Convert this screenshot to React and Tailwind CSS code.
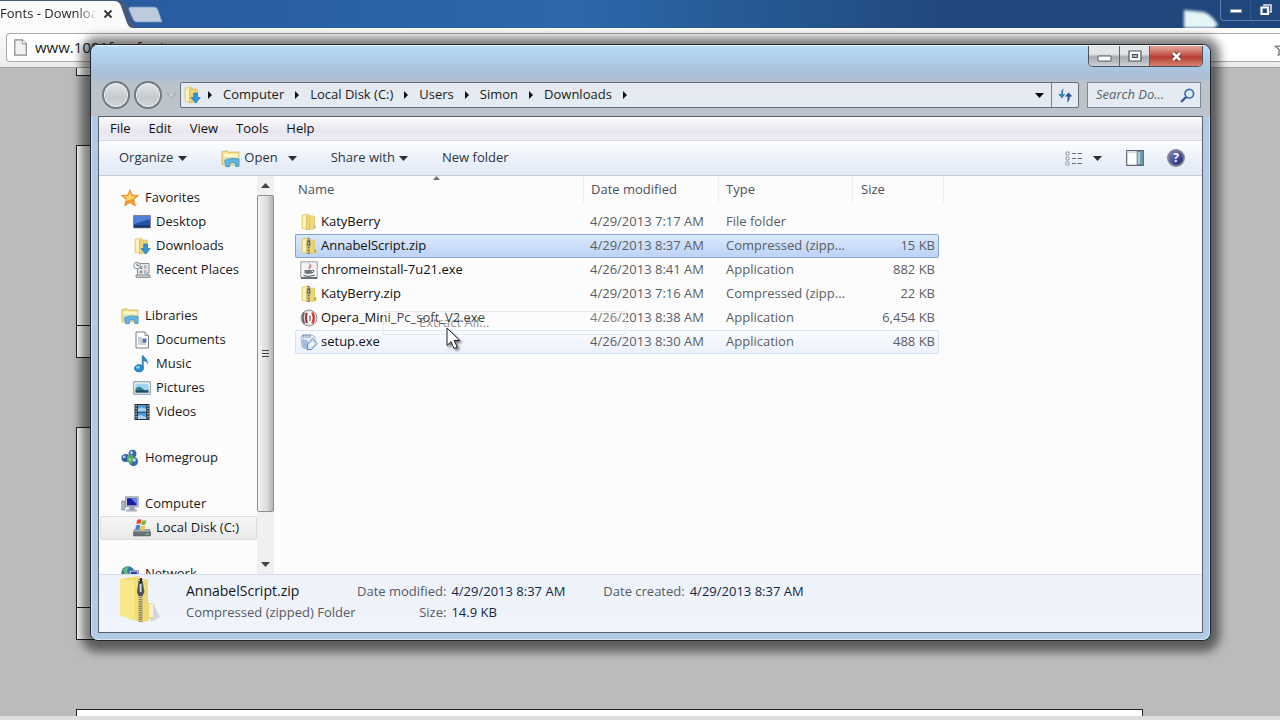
import { useState } from 'react';

const TREE = [
  { name: 'Favorites', icon: StarIcon, items: [
    { name: 'Desktop', icon: DesktopIcon },
    { name: 'Downloads', icon: DownloadsIcon },
    { name: 'Recent Places', icon: RecentIcon },
  ] },
  { name: 'Libraries', icon: LibraryIcon, items: [
    { name: 'Documents', icon: DocumentIcon },
    { name: 'Music', icon: MusicIcon },
    { name: 'Pictures', icon: PictureIcon },
    { name: 'Videos', icon: VideoIcon },
  ] },
  { name: 'Homegroup', icon: HomegroupIcon, items: [] },
  { name: 'Computer', icon: ComputerIcon, items: [{ name: 'Local Disk (C:)', icon: DiskIcon, current: true }] },
  { name: 'Network', icon: NetworkIcon, items: [] },
];

const FILES = [
  { name: 'KatyBerry', icon: FolderIcon, date: '4/29/2013 7:17 AM', type: 'File folder', size: '' },
  { name: 'AnnabelScript.zip', icon: ZipIcon, date: '4/29/2013 8:37 AM', type: 'Compressed (zipp...', size: '15 KB' },
  { name: 'chromeinstall-7u21.exe', icon: JavaIcon, date: '4/26/2013 8:41 AM', type: 'Application', size: '882 KB' },
  { name: 'KatyBerry.zip', icon: ZipIcon, date: '4/29/2013 7:16 AM', type: 'Compressed (zipp...', size: '22 KB' },
  { name: 'Opera_Mini_Pc_soft_V2.exe', icon: OperaIcon, date: '4/26/2013 8:38 AM', type: 'Application', size: '6,454 KB' },
  { name: 'setup.exe', icon: SetupIcon, date: '4/26/2013 8:30 AM', type: 'Application', size: '488 KB' },
];

const CRUMBS = ['Computer', 'Local Disk (C:)', 'Users', 'Simon', 'Downloads'];

/* ---------- icons ---------- */

function Icon({ children, className = 'size-[18px]' }) {
  return <svg viewBox="0 0 18 18" className={`shrink-0 ${className}`} aria-hidden="true">{children}</svg>;
}

function StarIcon() {
  return (
    <Icon>
      <path d="M9 .8l2.3 5.3 6.1.5-4.6 4 1.5 6.3L9 13.6l-5.3 3.3 1.5-6.3-4.6-4 6.1-.5z" fill="#f59b2e" stroke="#e08326" strokeWidth=".8" />
      <path d="M9 3l1.6 4 4 .4-3.1 2.5L9 10.500 5 12l.9-2.400-2.800-2.300 4.200-.4z" fill="#ffd766" />
    </Icon>
  );
}

function DesktopIcon() {
  return (
    <Icon>
      <path d="M.6 2.500h16.800v12.300H.6z" fill="#2453a8" stroke="#76849b" />
      <path d="M1 3h16v3L1 11z" fill="#4f82d6" />
      <path d="M1 12.600h16v2H1z" fill="#1b2c50" />
    </Icon>
  );
}

function FolderBase() {
  return (
    <>
      <path d="M2 2.200l6-1.400 1.200 1.500v14L2 15.500z" fill="#f5e48e" stroke="#d6bd62" strokeWidth=".6" />
      <path d="M6.500 3h7l1 1v11.600l-8 1.200z" fill="#ecd57a" stroke="#cbb057" strokeWidth=".6" />
      <path d="M3 3.200l3-.7v12.800l-3-.4z" fill="#fbf3bd" />
    </>
  );
}

function FolderIcon() {
  return (
    <Icon>
      <FolderBase />
      <path d="M8.800 2l5 1v9.500l2 .6v2.500l-3.600 1.400-2.800-1z" fill="#f0db7b" />
      <path d="M9.800 4v12" stroke="#dcc05c" />
      <path d="M13.400 12.500h1.800v3h-1.800z" fill="#a9b99a" />
    </Icon>
  );
}

function ZipIcon() {
  return (
    <Icon>
      <FolderBase />
      <path d="M12 3l2.500 1v8l2 .8v3l-3.500 1.200H12z" fill="#ecd36c" />
      <path d="M8.700 1v16" stroke="#75726a" strokeWidth="2.200" strokeDasharray="1 .5" />
      <path d="M7.500 3.500h2.600l.4 5H7.100z" fill="#4e565c" />
      <path d="M8.200 5h1v2.600h-1z" fill="#d6dde2" />
      <path d="M14.200 12.500h1.800v3h-1.800z" fill="#b3a468" />
    </Icon>
  );
}

function BigZipIcon() {
  return (
    <svg viewBox="0 0 44 50" className="h-[50px] w-11 shrink-0" aria-hidden="true">
      <path d="M30 36l5-8 7 14-9 5z" fill="#9a9a9a" opacity=".35" />
      <path d="M2 4l20-3v46L2 40z" fill="#f0dc72" />
      <path d="M8 4h22v38l-8 4-14-4z" fill="#f3df72" />
      <path d="M2 4l14 2v40L2 40z" fill="#f7e988" />
      <path d="M24 6l6-2v24h4v14l-4 4-6 1z" fill="#eeda70" />
      <path d="M31 29h4v13h-4z" fill="#f7f1cf" />
      <path d="M22.500 4v43" stroke="#8b8478" strokeWidth="4" strokeDasharray="1.500 .7" />
      <path d="M20.500 6h4l2 11-2 4h-4l-1.500-4z" fill="#4b545d" />
      <path d="M21.700 9h1.800v8h-1.800z" fill="#d3dade" />
      <path d="M22 3h2v5h-2z" fill="#22272b" />
    </svg>
  );
}

function DownloadsIcon() {
  return (
    <Icon>
      <FolderBase />
      <path d="M10.700 7h3.800v4.600h2.900l-4.700 5.600L8 11.600h2.700z" fill="#2f97dd" stroke="#1f6cae" strokeWidth=".6" />
    </Icon>
  );
}

function RecentIcon() {
  return (
    <Icon>
      <path d="M5 2.500h11v9.500h-1.500v3.500H4.500V8z" fill="#e6e8ea" stroke="#7d8388" strokeWidth=".9" />
      <path d="M7 5.500h2v2H7zM11 5h2.500M11 7h2.500M7 10h2v2H7zM11 10h2.500M11 12h2.500" fill="none" stroke="#70777d" strokeWidth=".8" />
      <path d="M3 14h14v2.500H3z" fill="#c8cccf" stroke="#7d8388" strokeWidth=".8" />
      <circle cx="4" cy="4.500" r="3.300" fill="#f5f6f7" stroke="#7c868e" strokeWidth=".9" />
      <path d="M4 2.500v2h1.800" fill="none" stroke="#38424a" strokeWidth=".8" />
    </Icon>
  );
}

function LibraryIcon({ className }) {
  return (
    <Icon className={className}>
      <path d="M1 2.500l5-.8 1 1.300h10v12H1z" fill="#f6e28b" stroke="#c6aa50" strokeWidth=".7" />
      <path d="M2.500 4.500h14v3h-14z" fill="#fdf5c6" />
      <path d="M3 7.500h13.800v6.500L3 15z" fill="#cfe7c2" />
      <path d="M3.500 10.800q5.500-2.800 13.500-1.300v7h-3.200v-3.200q-3-1-5.500 0v3.400H4.500z" fill="#62b4e2" stroke="#4287b5" strokeWidth=".7" />
    </Icon>
  );
}

function DocumentIcon() {
  return (
    <Icon>
      <path d="M3 1h9l3.500 3.500V17H3z" fill="#fff" stroke="#767f8a" />
      <path d="M12 1v3.500h3.500" fill="#dfe5ec" stroke="#767f8a" strokeWidth=".8" />
      <path d="M5 7h4M5 9h4M5 11h8M5 13h8" stroke="#8d96a5" strokeWidth=".9" />
      <path d="M9.500 7.500h4v4h-4z" fill="#536fb5" />
    </Icon>
  );
}

function MusicIcon() {
  return (
    <Icon>
      <ellipse cx="6" cy="13.300" rx="4.600" ry="3.700" fill="#2b8bc6" stroke="#1d6799" strokeWidth=".6" />
      <ellipse cx="5" cy="12.300" rx="2.200" ry="1.400" fill="#86cdf0" />
      <path d="M8.800.600h1.900c.7 2.500 4.800 3.200 4.200 9.200-.3-2-2-3.400-4.200-3.600v7.600H8.800z" fill="#2f86be" />
    </Icon>
  );
}

function PictureIcon() {
  return (
    <Icon>
      <path d="M.8 2.800h16.400v12.400H.8z" fill="#fff" stroke="#7e8994" />
      <path d="M2.500 4.500h13v9h-13z" fill="#9fd4f0" />
      <path d="M2.500 9.500q4-3.500 7 0t6 .5v3.500h-13z" fill="#317f91" />
      <path d="M2.500 12q6-2 13 0v1.500h-13z" fill="#234f5c" />
    </Icon>
  );
}

function VideoIcon() {
  return (
    <Icon>
      <path d="M1.500 1h15v16h-15z" fill="#262d33" />
      <path d="M4.800 2h8.400v6.400H4.800zM4.800 9.600h8.400V16H4.800z" fill="#4c9ad6" />
      <path d="M4.800 6l4-2 4.400 2v2.400H4.800zM4.800 13l3-1 5.400 2v2H4.800z" fill="#a4d3f1" />
      <path d="M3.100 2v14M14.900 2v14" stroke="#c9d0d5" strokeWidth="1.300" strokeDasharray="1.400 1.300" />
    </Icon>
  );
}

function HomegroupIcon() {
  return (
    <Icon>
      <circle cx="11.500" cy="4.700" r="3.900" fill="#3a62ae" />
      <circle cx="4.500" cy="9" r="4" fill="#325f9f" />
      <circle cx="12.500" cy="12.500" r="4.500" fill="#3566b3" />
      <path d="M6 7l5-2 2 4-2 6-5-2z" fill="#56a957" />
      <circle cx="10.500" cy="3.500" r="1.500" fill="#b5cff1" />
      <circle cx="3.200" cy="7.800" r="1.500" fill="#a6c8ea" />
      <circle cx="13.200" cy="11" r="1.700" fill="#b9d6f4" />
      <path d="M7 9l3 1-1 3z" fill="#b3e0a0" />
    </Icon>
  );
}

function ComputerIcon() {
  return (
    <Icon>
      <path d="M.8 6h3v9h-3z" fill="#b6bcc4" stroke="#767e88" strokeWidth=".7" />
      <path d="M4.500 1.800h12.700v10H4.500z" fill="#c7ccd4" stroke="#767d8a" strokeWidth=".7" />
      <path d="M6 3.200h9.700v7.200H6z" fill="#1a1fa5" />
      <path d="M10 3.200h5.700v6z" fill="#6d83ea" />
      <path d="M9 12h4l1.500 3h-7z" fill="#9aa2ae" />
      <path d="M5.500 14.800h10v1.400h-10z" fill="#c4c9d1" stroke="#858c97" strokeWidth=".5" />
    </Icon>
  );
}

function DiskIcon() {
  return (
    <Icon>
      <path d="M1.800 10.500h14.500l1.300 2.500v4H.5v-4z" fill="#69707a" stroke="#50565e" strokeWidth=".5" />
      <path d="M2 10.600h14l1 1.900H1z" fill="#a9b0b6" />
      <path d="M12.500 14.400h3.300v1.300h-3.300z" fill="#76cf74" />
      <path d="M4.200 1.200q2-1.500 4.300-.5L7.600 5q-2-1-4.300.3z" fill="#dd4f2b" />
      <path d="M9.300 1.200q2 .9 4.100-.3L12.300 5.500q-2 1-4 .2z" fill="#7eb83a" />
      <path d="M3.100 6.500q2.200-1.300 4.300-.3l-1 4.500q-2-.9-4.200.4z" fill="#3f83d1" />
      <path d="M8.200 6.800q2 .9 4.100-.1l-1 4.200q-2 1-4 .1z" fill="#f2c53b" />
    </Icon>
  );
}

function NetworkIcon() {
  return (
    <Icon>
      <circle cx="7" cy="8" r="6.700" fill="#2d79a8" />
      <path d="M2 5q3-4 6-3l-2 4 2 3-4 2z" fill="#65b77a" />
      <path d="M8.500 5.500h9v6.500h-9z" fill="#c9d0dc" stroke="#6d7893" strokeWidth=".7" />
      <path d="M9.800 6.700h6.400v4.200H9.800z" fill="#2c3fae" />
    </Icon>
  );
}

function JavaIcon() {
  return (
    <Icon>
      <path d="M.8.800h16.400v16.400H.8z" fill="#f3f3f3" stroke="#9a9da0" />
      <path d="M1 17h16.200" stroke="#4d5358" strokeWidth="1.500" />
      <path d="M9 2.500q2.500 1.500.5 3t.5 3M11.500 4.500q-2 1.300-.5 2.500" fill="none" stroke="#b0645c" strokeWidth="1" />
      <path d="M4.500 9h7.300v3.300q-3.500 1.500-7.300 0z" fill="#6b7683" />
      <path d="M11.800 9.300q3-.2 1.500 1.800l-2 1M3.500 14.500q5.500 2 11-.3" fill="none" stroke="#4e5861" />
    </Icon>
  );
}

function OperaIcon() {
  return (
    <Icon>
      <circle cx="9" cy="9" r="8" fill="#d8dadc" stroke="#8d9194" strokeWidth=".9" />
      <path d="M4.200 3.500q-3 5.500.3 11" fill="none" stroke="#5d6266" strokeWidth="1.800" />
      <ellipse cx="10" cy="9" rx="5" ry="6.500" fill="#f7f7f7" />
      <path d="M6.800 4q-1.800 5 .2 10" fill="none" stroke="#a83330" strokeWidth="2" />
      <path d="M12.300 3.500q3 5.500 0 11" fill="none" stroke="#d6402f" strokeWidth="2.400" />
      <path d="M10 6.500v5.500" stroke="#5c6d8a" strokeWidth="1.300" />
    </Icon>
  );
}

function SetupIcon() {
  return (
    <Icon>
      <path d="M1 4l2-2h9l3 2v9l-7 4-6-3z" fill="#e6edf5" stroke="#8ba1bb" strokeWidth=".7" />
      <path d="M2 6l6 1.500v9L2.500 14z" fill="#9dbde2" />
      <path d="M2.500 2.200h9M2.500 4h9" stroke="#56779f" strokeWidth="1" strokeDasharray="2 1" />
      <path d="M12.500 5.500l4.500 5-5.500 6H7.500v-5z" fill="#cfe2f6" stroke="#5782b8" strokeWidth=".9" />
      <path d="M9 12l3.500-3.500 2 2.200L11 14.500H9z" fill="#f4f9fe" />
    </Icon>
  );
}

function Caret({ className = 'fill-[#27303c]' }) {
  return <svg viewBox="0 0 9 5" className={`h-[5px] w-[9px] shrink-0 ${className}`} aria-hidden="true"><path d="M0 0h9L4.500 5z" /></svg>;
}

function CrumbArrow() {
  return <svg viewBox="0 0 4 8" className="h-2 w-1 shrink-0" aria-hidden="true"><path d="M0 0l4 4-4 4z" fill="#111" /></svg>;
}

/* ---------- browser behind the window ---------- */

function Browser() {
  return (
    <div className="flex h-full flex-col bg-[#bbbbbb]">
      <div className="flex h-7 shrink-0 items-start justify-between bg-linear-to-r from-[#28589c] via-[#2c68aa] via-45% to-[#20477b] to-75%">
        <div className="relative h-7 w-[170px]">
          <svg viewBox="0 0 170 28" className="absolute inset-0 h-7 w-[170px]" aria-hidden="true">
            <path d="M0 0h118q6 0 8 6l6 16q2 5 6 6H0z" fill="#47597a" />
            <path d="M0 1h114q5 0 7 5l6 17q2 5 6 5H0z" fill="#fbfbfb" />
            <path d="M131 7h23q3 0 4 3l4 12h-25q-3 0-4-3l-4-9q-1-3 2-3z" fill="#bccbdd" stroke="#7896bf" strokeWidth=".8" />
          </svg>
          <div className="relative flex h-7 items-center">
            <span className="w-[95px] bg-linear-to-r from-[#222] from-80% to-[#222]/20 bg-clip-text whitespace-nowrap text-transparent">Fonts - Downloa</span>
            <button aria-label="Close tab" className="ml-2 size-[10px]">
              <svg viewBox="0 0 10 10" className="size-[10px]"><path d="M1.500 1.500l7 7m0-7l-7 7" stroke="#3c3c3c" strokeWidth="2" /></svg>
            </button>
          </div>
        </div>
        <div className="flex h-7 items-start">
          <svg viewBox="0 0 40 22" className="mt-[6px] h-[22px] w-10" aria-hidden="true">
            <defs><filter id="soft"><feGaussianBlur stdDeviation="1.500" /></filter></defs>
            <path d="M4 4l20 2q8 3 14 13l-4 3H4z" fill="#e6f5f5" filter="url(#soft)" />
          </svg>
          <div className="flex h-[21px] rounded-bl border-b border-l border-[#5f7fae]">
            <button aria-label="Minimize browser" className="flex w-[30px] items-end justify-center border-r border-[#35588f] pb-[7px]">
              <span className="h-1 w-3 border border-[#8a95a8] bg-white" />
            </button>
            <button aria-label="Restore browser" className="flex w-[29px] items-center justify-center">
              <svg viewBox="0 0 14 14" className="size-[14px]"><path d="M5 3V2h7v7h-1.500" fill="none" stroke="#dfe6f0" strokeWidth="1.600" /><path d="M2.500 4.500h6.500v6.500H2.500z" fill="none" stroke="#fff" strokeWidth="2.200" /></svg>
            </button>
          </div>
        </div>
      </div>
      <div className="flex h-10 shrink-0 items-center border-b border-[#a5a5a5] bg-linear-to-b from-[#fcfcfc] to-[#ececec] pl-[6px]">
        <div className="flex h-[29px] min-w-0 flex-1 items-center gap-2 rounded-l border border-r-0 border-[#a9a9a9] bg-white pl-[7px]">
          <svg viewBox="0 0 13 17" className="h-[17px] w-[13px] shrink-0" aria-hidden="true">
            <path d="M.8.800h7.500l4 4v11.400H.8z" fill="#f2f2f2" stroke="#8a8a8a" strokeWidth="1.200" />
            <path d="M8.300.8v4h4" fill="#fff" stroke="#8a8a8a" />
          </svg>
          <input aria-label="Address" defaultValue="www.1001freefonts.com" className="min-w-0 flex-1 bg-transparent text-[15px] text-[#222] outline-none" />
          <div className="w-[6px] overflow-hidden">
            <svg viewBox="0 0 18 18" className="size-[18px]" aria-hidden="true"><path d="M9 2l2.100 5 5.400.4-4.100 3.500 1.300 5.300L9 13.300l-4.700 2.900 1.300-5.300L1.500 7.400 6.900 7z" fill="#fff" stroke="#777" strokeWidth="1.300" /></svg>
          </div>
        </div>
      </div>
      <div className="mr-[137px] ml-[76px] flex min-h-0 flex-1 flex-col gap-[69px] overflow-hidden">
        <div className="h-2 shrink-0 border border-t-0 border-[#222] bg-white" />
        {[0, 1].map((n) => (
          <div key={n} className="flex h-[213px] shrink-0 flex-col border border-[#222] bg-white">
            <div className="flex-1" />
            <div className="h-8 border-t border-[#222]" />
          </div>
        ))}
        <div className="h-20 shrink-0 border border-[#222] bg-white" />
      </div>
      <div className="h-1 shrink-0 bg-[#dedede]" />
    </div>
  );
}

/* ---------- explorer window ---------- */

function CaptionButtons() {
  return (
    <div className="mr-[7px] flex h-[21px] overflow-hidden rounded-b-[5px] border border-t-0 border-[#4a525c]">
      <button aria-label="Minimize" className="flex w-[31px] items-center justify-center border-r border-[#59626c] bg-linear-to-b from-[#e2e5e8] from-40% via-[#a6abb1] via-55% to-[#cdd0d4]">
        <svg viewBox="0 0 15 7" className="mt-1 h-[7px] w-[15px]"><path d="M1 1h13v5H1z" fill="#fff" stroke="#555c64" /></svg>
      </button>
      <button aria-label="Maximize" className="flex w-[30px] items-center justify-center border-r border-[#59626c] bg-linear-to-b from-[#e2e5e8] from-40% via-[#a6abb1] via-55% to-[#cdd0d4]">
        <svg viewBox="0 0 14 12" className="h-3 w-[14px]"><path d="M1 1h12v10H1z" fill="#fff" stroke="#4d545c" strokeWidth="1.200" /><path d="M4.500 4.500h5v3h-5z" fill="#aeb4ba" stroke="#4d545c" strokeWidth="1.200" /></svg>
      </button>
      <button aria-label="Close" className="flex w-[52px] items-center justify-center bg-linear-to-b from-[#dd9a8e] from-10% via-[#b73e31] via-55% to-[#d9806f]">
        <svg viewBox="0 0 13 11" className="h-[11px] w-[13px]"><path d="M3 2l7 7m0-7L3 9" stroke="#5e3531" strokeWidth="4.500" /><path d="M3 2l7 7m0-7L3 9" stroke="#fff" strokeWidth="2.600" /></svg>
      </button>
    </div>
  );
}

function RoundButton({ label }) {
  return (
    <button aria-label={label} className="size-7 shrink-0 rounded-full border-2 border-[#727a82] bg-linear-to-b from-[#e2e4e6] via-[#c6cacf] via-60% to-[#d2d6da] shadow-[inset_0_0_0_1px_#eef1f4]" />
  );
}

function NavBar() {
  return (
    <div className="flex h-[26px] items-center">
      <RoundButton label="Back" />
      <span className="w-1" />
      <RoundButton label="Forward" />
      <button aria-label="Recent pages" className="flex w-[18px] justify-center"><Caret className="fill-[#cdd4dc] stroke-[#98a2ad]" /></button>
      <div className="flex h-[26px] min-w-0 flex-1 rounded-xs border border-[#656e79] bg-linear-to-b from-[#e6e9ee] to-[#e3ecf4]">
        <div className="flex min-w-0 flex-1 items-center gap-[11px] pr-[7px] pl-[2px]">
          <DownloadsIcon />
          <span className="-ml-1 flex items-center gap-[11px]">
            <CrumbArrow />
            {CRUMBS.map((crumb) => (
              <span key={crumb} className="flex items-center gap-[11px]">
                <a href="#" className="whitespace-nowrap">{crumb}</a>
                <CrumbArrow />
              </span>
            ))}
          </span>
          <button aria-label="Previous locations" className="ml-auto"><Caret className="fill-black" /></button>
        </div>
        <button aria-label="Refresh" className="flex w-[27px] items-center justify-center border-l border-[#767f8a]">
          <svg viewBox="0 0 16 16" className="size-4">
            <path d="M6.500 1.500Q4 2.500 4 7H1l4 4.500L8.500 7H6Q6 4 6.500 1.500z" fill="#3d84b4" />
            <path d="M10 15.500q3-1.500 2.700-6H15.500L11.500 5.500 8 9.500h2.500q.5 3-.5 6z" fill="#2b4f98" />
          </svg>
        </button>
      </div>
      <label className="ml-2 flex h-[26px] w-[114px] items-center gap-1 border border-[#7d8793] bg-[#e5ebf2] pr-[5px] pl-2">
        <input type="search" aria-label="Search Downloads" placeholder="Search Do..." className="min-w-0 flex-1 bg-transparent italic outline-none placeholder:text-[#5b6067]" />
        <svg viewBox="0 0 15 15" className="size-[15px] shrink-0"><circle cx="9.300" cy="5.700" r="4.300" fill="#dceaf7" stroke="#3d6fae" strokeWidth="1.700" /><path d="M6.200 9L1 14" stroke="#35598c" strokeWidth="2.400" /></svg>
      </label>
    </div>
  );
}

function MenuBar() {
  return (
    <div className="flex h-6 shrink-0 items-center gap-[18px] border-b border-[#cfd4df] bg-linear-to-b from-[#fbfbfd] via-[#e8e7f0] via-60% to-[#eeedf5] pl-[11px] text-[#111]">
      {['File', 'Edit', 'View', 'Tools', 'Help'].map((item) => <button key={item}>{item}</button>)}
    </div>
  );
}

function Toolbar() {
  return (
    <div className="flex h-[35px] shrink-0 items-center border-b border-[#c3cfdf] bg-linear-to-b from-[#fbfcfe] via-[#eaf0f9] via-60% to-[#e2eaf5] pr-[17px] pl-5 text-[#2b3442]">
      <button className="flex items-center gap-[5px]">Organize <Caret /></button>
      <button className="ml-[34px] flex items-center gap-1"><LibraryIcon className="size-[19px]" />Open</button>
      <button aria-label="Open options" className="ml-[10px]"><Caret /></button>
      <button className="ml-[34px] flex items-center gap-1">Share with <Caret /></button>
      <button className="ml-[34px]">New folder</button>
      <button aria-label="Change view" className="ml-auto flex items-center gap-[10px]">
        <svg viewBox="0 0 18 16" className="h-4 w-[18px]">
          <path d="M1 2h3v3H1zM1 7h3v3H1zM1 12h3v3H1z" fill="#fff" stroke="#8b939d" strokeWidth=".9" />
          <path d="M7 3.500h4M12.500 3.500H17M7 8.500h4M12.500 8.500H17M7 13.500h4M12.500 13.500H17" stroke="#666f7a" strokeWidth="1.200" />
        </svg>
        <Caret />
      </button>
      <button aria-label="Preview pane" className="ml-6">
        <svg viewBox="0 0 18 16" className="h-4 w-[18px]">
          <path d="M.7.700h16.600v14.600H.7z" fill="#fff" stroke="#5d6773" strokeWidth="1.200" />
          <path d="M1.300 1.300h9.500v2H1.300z" fill="#d7dee7" />
          <path d="M11.200 1.300h5.500v13.400h-5.500z" fill="#a9cad6" stroke="#4e6f80" strokeWidth=".9" />
          <path d="M14 1.800h2.300v12.400H14z" fill="#6f9dab" />
        </svg>
      </button>
      <button aria-label="Help" className="ml-[23px] size-[18px] rounded-full border-2 border-[#7f858f] bg-linear-to-br from-[#8184c8] to-[#1d2173] text-xs leading-3 font-bold text-white">?</button>
    </div>
  );
}

function Sidebar() {
  return (
    <div className="flex w-[180px] shrink-0">
      <nav aria-label="Folders" className="flex min-w-0 flex-1 flex-col gap-[22px] overflow-hidden pt-[10px] pl-px">
        {TREE.map((group) => (
          <ul key={group.name}>
            <li>
              <a href="#" className="flex h-6 items-center gap-[6px] pl-[21px] whitespace-nowrap"><group.icon />{group.name}</a>
            </li>
            {group.items.map((item) => (
              <li key={item.name}>
                <a
                  href="#"
                  className={`flex h-6 items-center gap-[5px] border pl-8 whitespace-nowrap ${item.current ? 'rounded-xs border-[#dcdcdc] bg-linear-to-b from-[#f6f6f6] to-[#e9e9e9]' : 'border-transparent'}`}
                >
                  <item.icon />{item.name}
                </a>
              </li>
            ))}
          </ul>
        ))}
      </nav>
      <div className="mr-[5px] flex w-[17px] shrink-0 flex-col bg-[#f0f0f0]">
        <button aria-label="Scroll up" className="flex h-[19px] shrink-0 items-center justify-center"><Caret className="rotate-180 fill-[#444]" /></button>
        <div className="flex-1">
          <div className="flex h-[88%] flex-col items-center justify-center gap-[2px] rounded-xs border border-[#8e8e8e] bg-linear-to-r from-[#f4f4f4] via-[#dcdcdc] via-60% to-[#b4b4b4]">
            <span className="h-px w-[7px] bg-[#444]" />
            <span className="h-px w-[7px] bg-[#444]" />
            <span className="h-px w-[7px] bg-[#444]" />
          </div>
        </div>
        <button aria-label="Scroll down" className="flex h-[19px] shrink-0 items-center justify-center"><Caret className="fill-[#444]" /></button>
      </div>
    </div>
  );
}

function cellStyle(state) {
  if (state === 'selected') return 'border-[#84a5cc] bg-linear-to-b from-[#dbe8fb] to-[#bcd3f8]';
  if (state === 'hover') return 'border-[#d5e3f2] bg-linear-to-b from-[#fafbfe] to-[#edf1fc]';
  return 'border-transparent';
}

function FileList() {
  const [selected, setSelected] = useState('AnnabelScript.zip');

  return (
    <div className="relative min-w-0 flex-1 overflow-hidden pl-4">
      <table className="w-[649px] table-fixed border-separate border-spacing-0 text-left">
        <colgroup>
          <col className="w-[289px]" />
          <col className="w-[135px]" />
          <col className="w-[134px]" />
          <col className="w-[86px]" />
          <col className="w-[5px]" />
        </colgroup>
        <thead className="text-[#4c525a]">
          <tr className="h-[27px]">
            <th className="relative border-r border-[#eceef2] pl-[3px] font-normal">
              Name
              <svg viewBox="0 0 7 4" className="absolute top-0 left-[138px] h-1 w-[7px]" aria-hidden="true"><path d="M0 4l3.500-4L7 4z" fill="#6c747d" /></svg>
            </th>
            <th className="border-r border-[#eceef2] pl-[7px] font-normal">Date modified</th>
            <th className="border-r border-[#eceef2] pl-[7px] font-normal">Type</th>
            <th className="pl-2 font-normal">Size</th>
            <th className="border-r border-[#eceef2]" aria-hidden="true" />
          </tr>
          <tr className="h-[7px]" aria-hidden="true" />
        </thead>
        <tbody className="text-[#5a5e64]">
          {FILES.map((file) => {
            const style = cellStyle(file.name === selected ? 'selected' : file.name === 'setup.exe' ? 'hover' : '');
            return (
              <tr key={file.name} className="h-6" onClick={() => setSelected(file.name)}>
                <td className={`rounded-l-xs border-y border-l p-0 pl-1 text-[#111] ${style}`}>
                  <span className="flex items-center gap-[3px] whitespace-nowrap"><file.icon />{file.name}</span>
                </td>
                <td className={`border-y p-0 pl-[6px] whitespace-nowrap ${style}`}>{file.date}</td>
                <td className={`border-y p-0 pl-[7px] whitespace-nowrap ${style}`}>{file.type}</td>
                <td className={`rounded-r-xs border-y border-r p-0 pr-[3px] text-right whitespace-nowrap ${style}`}>{file.size}</td>
                <td className="p-0" />
              </tr>
            );
          })}
        </tbody>
      </table>

      {/* context menu item fading out */}
      <div className="pointer-events-none absolute top-[135px] left-[104px] flex h-6 w-[243px] items-center border border-[#e6ebf2] bg-white/20 pl-[35px] text-[#222]/50">
        Extract All...
      </div>
      <svg viewBox="0 0 16 24" className="absolute top-[151px] left-[167px] h-6 w-4 drop-shadow-[2px_2px_1px_rgba(0,0,0,0.5)]" aria-hidden="true">
        <path d="M1 1v17.500l4-3.800 3 6.800 3.200-1.400-3-6.600h5.600z" fill="#fff" stroke="#222" />
      </svg>
    </div>
  );
}

function DetailsPane() {
  return (
    <div className="flex h-[58px] shrink-0 border-t border-[#d5dce6] bg-linear-to-b from-[#eef2fb] to-[#f1f4f9] pl-[19px] text-[#535a64]">
      <BigZipIcon />
      <div className="ml-6 w-[149px] pt-[6px] whitespace-nowrap">
        <p className="h-[21px] text-sm leading-5 text-[#14171c]">AnnabelScript.zip</p>
        <p className="leading-5">Compressed (zipped) Folder</p>
      </div>
      <dl className="ml-[22px] grid h-[42px] grid-cols-[auto_auto] content-start gap-x-[5px] pt-[6px] leading-5 whitespace-nowrap">
        <dt className="h-[21px] text-right">Date modified:</dt>
        <dd className="text-[#14273f]">4/29/2013 8:37 AM</dd>
        <dt className="text-right">Size:</dt>
        <dd className="text-[#14273f]">14.9 KB</dd>
      </dl>
      <dl className="ml-[38px] flex gap-[5px] pt-[6px] leading-5 whitespace-nowrap">
        <dt>Date created:</dt>
        <dd className="text-[#14273f]">4/29/2013 8:37 AM</dd>
      </dl>
    </div>
  );
}

function ExplorerWindow() {
  return (
    <section
      aria-label="Downloads"
      className="absolute top-11 right-[69px] bottom-[79px] left-[90px] flex flex-col overflow-hidden rounded-lg border border-[#20262d] bg-[#b3cae4] shadow-[0_2px_10px_9px_rgba(0,0,0,0.5)]"
    >
      <div className="shrink-0 border-t border-white/80 bg-linear-to-b from-[#b8dbf8] via-[#a9bfd8] via-[28px] to-[#bcc3cb] to-[40px] pb-2">
        <div className="flex h-[36px] items-start justify-end">
          <CaptionButtons />
        </div>
        <div className="pr-[9px] pl-[11px]">
          <NavBar />
        </div>
      </div>
      <div className="flex min-h-0 flex-1 flex-col rounded-b-[7px] border border-t-0 border-[#d3e4f5] px-[6px] pb-[6px]">
        <div className="flex min-h-0 flex-1 flex-col border border-[#56616e] bg-[#fcfcfc]">
          <MenuBar />
          <Toolbar />
          <div className="flex min-h-0 flex-1">
            <Sidebar />
            <FileList />
          </div>
          <DetailsPane />
        </div>
      </div>
    </section>
  );
}

export default function App() {
  return (
    <div className="relative h-screen overflow-hidden font-['Open_Sans','Noto_Sans',sans-serif] text-[13px] text-[#1a1a1a]">
      <Browser />
      <ExplorerWindow />
    </div>
  );
}
